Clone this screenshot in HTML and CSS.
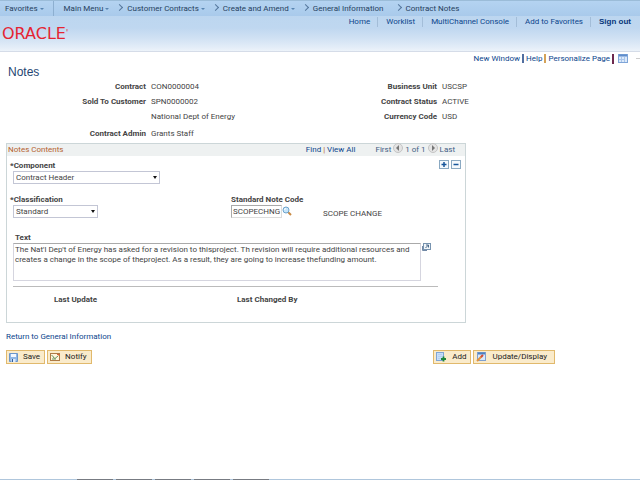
FILE: index.html
```html
<!DOCTYPE html>
<html lang="en">
<head>
<meta charset="utf-8">
<title>Contract Notes</title>
<link rel="stylesheet" href="styles.css">
</head>
<body>
<header class="header">
  <nav class="crumbs" aria-label="Breadcrumb">
    <a class="crumb favorites has-menu" href="#">Favorites</a>
    <a class="crumb main-menu has-menu" href="#">Main Menu</a>
    <a class="crumb next has-menu" href="#">Customer Contracts</a>
    <a class="crumb next has-menu" href="#">Create and Amend</a>
    <a class="crumb next" href="#">General Information</a>
    <a class="crumb next last" href="#">Contract Notes</a>
  </nav>
  <div class="banner">
    <div class="logo">ORACLE<span class="mark">'</span></div>
    <nav class="links" aria-label="Main">
      <a href="#">Home</a>
      <a href="#">Worklist</a>
      <a href="#">MultiChannel Console</a>
      <a href="#">Add to Favorites</a>
      <a class="signout" href="#">Sign out</a>
    </nav>
  </div>
</header>
<main>
  <div class="pagebar">
    <a href="#">New Window</a>
    <a class="blue" href="#">Help</a>
    <a class="gold" href="#">Personalize Page</a>
    <a class="wine" href="#" aria-label="Page grid">
      <svg width="10" height="10" viewBox="0 0 10 10"><rect x=".5" y=".5" width="9" height="8" fill="#dbe9fa" stroke="#7fa5d8"/><path d="M1 1.500h8" stroke="#5f8dcc" stroke-width="2"/><path d="M1 5.500h5M3.500 3v5M6.500 3v5" stroke="#a9c5ea"/></svg>
    </a>
    <span class="edge"></span>
  </div>
  <h1>Notes</h1>
  <dl class="summary">
    <dt>Contract</dt><dd>CON0000004</dd><dt>Business Unit</dt><dd>USCSP</dd>
    <dt>Sold To Customer</dt><dd>SPN0000002</dd><dt>Contract Status</dt><dd>ACTIVE</dd>
    <dt></dt><dd>National Dept of Energy</dd><dt>Currency Code</dt><dd>USD</dd>
    <dt>Contract Admin</dt><dd>Grants Staff</dd>
  </dl>
  <form>
    <section class="panel">
      <div class="panel-head">
        <h2>Notes Contents</h2>
        <div class="find"><a href="#">Find</a> | <a href="#">View All</a></div>
        <div class="pager">
          <span>First</span>
          <button type="button" class="round" aria-label="Previous"><svg width="10" height="10" viewBox="0 0 10 10"><circle cx="5" cy="5" r="4.500" fill="#e4e4e4" stroke="#c4c4c4"/><path d="M6 2v6L3 5z" fill="#777"/></svg></button>
          <span>1 of 1</span>
          <button type="button" class="round" aria-label="Next"><svg width="10" height="10" viewBox="0 0 10 10"><circle cx="5" cy="5" r="4.500" fill="#e4e4e4" stroke="#c4c4c4"/><path d="M4 2v6l3-3z" fill="#777"/></svg></button>
          <span>Last</span>
        </div>
      </div>
      <div class="panel-body">
        <div class="row component-row">
          <div class="field">
            <label for="component">*Component</label>
            <span class="select wide"><select id="component"><option>Contract Header</option></select></span>
          </div>
          <div class="row-tools">
            <button type="button" aria-label="Add row"><svg width="10" height="9" viewBox="0 0 10 9"><rect x=".5" y=".5" width="9" height="8" fill="#f4f9fd" stroke="#8aa9c2"/><path d="M2.500 4.500h5M5 2v5" stroke="#17569b" stroke-width="1.500"/></svg></button>
            <button type="button" aria-label="Delete row"><svg width="10" height="9" viewBox="0 0 10 9"><rect x=".5" y=".5" width="9" height="8" fill="#f4f9fd" stroke="#8aa9c2"/><path d="M2.500 4.500h5" stroke="#17569b" stroke-width="1.500"/></svg></button>
          </div>
        </div>
        <div class="row class-row">
          <div class="field class-field">
            <label for="classification">*Classification</label>
            <span class="select"><select id="classification"><option>Standard</option></select></span>
          </div>
          <div class="field">
            <label class="code-label" for="code">Standard Note Code</label>
            <div class="lookup">
              <input id="code" type="text" value="SCOPECHNG">
              <button type="button" aria-label="Look up"><svg width="10" height="10" viewBox="0 0 10 10"><path d="M6 6l3 3" stroke="#c98b45" stroke-width="2"/><circle cx="4" cy="4" r="3" fill="#c7e6fa" stroke="#6da3cc"/><path d="M2.500 4a1.500 1.500 0 0 1 1.500-1.500" fill="none" stroke="#fff"/></svg></button>
              <span class="code-name">SCOPE CHANGE</span>
            </div>
          </div>
        </div>
        <label class="text-label" for="text">Text</label>
        <div class="text-row">
          <textarea id="text">The Nat'l Dep't of Energy has asked for a revision to thisproject. Th revision will require additional resources and
creates a change in the scope of theproject. As a result, they are going to increase thefunding amount.</textarea>
          <button type="button" aria-label="Expand text"><svg width="10" height="9" viewBox="0 0 10 9"><path d="M1.500 3v4.500H6" fill="none" stroke="#7088a5"/><rect x="2.500" y=".5" width="7" height="6" fill="#f0f5fa" stroke="#7894b0"/><path d="M4.500 5l3-3M5 2h2.500v2.500" fill="none" stroke="#496889"/></svg></button>
        </div>
        <div class="updates"><span>Last Update</span><span>Last Changed By</span></div>
      </div>
    </section>
    <a class="return" href="#">Return to General Information</a>
    <div class="toolbar">
      <div class="group">
        <button type="submit" class="save"><svg width="9" height="9" viewBox="0 0 9 9"><path d="M.5.5h8v8h-8z" fill="#91b7e5" stroke="#6b96cb"/><path d="M2 1h5v3H2z" fill="#f2f7ff"/><path d="M2.500 6h4v3h-4z" fill="#dce9fb"/><path d="M3.500 6v3" stroke="#315f9b"/></svg>Save</button>
        <button type="button" class="notify"><svg width="10" height="8" viewBox="0 0 10 8"><rect x=".5" y=".5" width="9" height="7" fill="#fff4dc" stroke="#ae7b45"/><path d="M1.500 2l2 2M8 3L5 5.500 3 4M2 6h4" fill="none" stroke="#69965f"/><path d="M7 1.500h2V3" fill="none" stroke="#d76437"/></svg>Notify</button>
      </div>
      <div class="group">
        <button type="button" class="add"><svg width="11" height="10" viewBox="0 0 11 10"><rect x=".5" y=".5" width="7" height="8" fill="#c8defa" stroke="#7fa5d5"/><path d="M2 2.500h4M2 4.500h4M2 6.500h3" stroke="#b5d0f0"/><path d="M5 7h5M7.500 4.500v5" stroke="#20863a" stroke-width="1.800"/></svg>Add</button>
        <button type="button" class="update"><svg width="10" height="10" viewBox="0 0 10 10"><rect x="1.500" y=".5" width="8" height="8" fill="#d8e8fb" stroke="#7d9fcf"/><path d="M2 1.500h7" stroke="#4f80be" stroke-width="2"/><path d="M1 9l5-5" stroke="#e3923c" stroke-width="2"/><path d="M5 5l2-2" stroke="#d14b3c" stroke-width="2"/></svg>Update/Display</button>
      </div>
    </div>
  </form>
</main>
<footer class="strip"><i></i><i></i><i></i><i></i><i></i></footer>
</body>
</html>
```
FILE: styles.css
```css
* { box-sizing: border-box; }
body {
  margin: 0;
  min-height: 100vh;
  display: flex;
  flex-direction: column;
  background: #fff;
  color: #444;
  font: 8px/10px Roboto, "Liberation Sans", Arial, sans-serif;
}
a { color: #0b458c; text-decoration: none; }
button, input, select, textarea { margin: 0; font: inherit; color: inherit; border-radius: 0; }
button { padding: 0; border: 0; background: none; }
svg { display: block; flex: none; }
label, dt { font-weight: bold; }

.header {
  background: linear-gradient(#b9d5ef 0, #bfd7f0 28px, #d0e1f3 38px, #e5eef8 48px, #edf3fa 51px);
  border-bottom: 1px solid #d5dce8;
}
.crumbs {
  display: flex;
  height: 16px;
  align-items: center;
  padding-left: 5px;
  border-top: 1px solid #9bbcd8;
  background: linear-gradient(#b4d3f1, #a9caeb);
}
.crumb { color: #263f60; white-space: nowrap; }
.has-menu::after {
  content: "";
  display: inline-block;
  margin: 0 0 1px 2px;
  border: 2px solid transparent;
  border-top-color: #5783b0;
  border-bottom: 0;
}
.favorites { padding-right: 9px; border-right: 1px solid #8dafd0; line-height: 15px; }
.main-menu { margin-left: 10px; }
.next::before {
  content: "";
  display: inline-block;
  width: 4px;
  height: 4px;
  margin: 0 5px 1px 8px;
  border: solid #55779c;
  border-width: 1px 1px 0 0;
  transform: rotate(45deg);
}
.last { margin-left: 4px; }
.banner { display: flex; justify-content: space-between; height: 35px; }
.logo { padding: 9px 0 0 2px; color: #e52432; font: 16px/17px "DejaVu Sans", sans-serif; }
.mark { font-size: 8px; vertical-align: top; }
.links { display: flex; padding: 1px 9px 0 0; }
.links a { height: 10px; padding-left: 8px; margin-left: 7px; border-left: 1px solid #a3bdd8; }
.links a:first-child { border-left: 0; }
.links .signout { color: #06357a; font: bold 8px/10px "Liberation Sans", Arial, sans-serif; }

.pagebar { display: flex; align-items: center; justify-content: flex-end; height: 13px; }
.pagebar a + a { padding-left: 2px; margin-left: 2px; border-left: 2px solid; line-height: 9px; }
.pagebar .blue { border-color: #526fa0; }
.pagebar .gold { border-color: #d5a258; }
.pagebar a.wine { border-color: #6d294e; padding-left: 4px; }
.edge { width: 4px; height: 1px; margin-left: 8px; background: #ccc; }
h1 { margin: 0 0 0 8px; color: #254572; font: 12px/14px "Liberation Sans", Arial, sans-serif; }
.summary {
  display: grid;
  grid-template-columns: 146px 196px 95px 1fr;
  grid-template-rows: repeat(3, 15px) 19px;
  align-items: center;
  margin: 0;
}
.summary dt { text-align: right; }
.summary dd { margin: 0 0 0 5px; }
.panel { max-width: 460px; margin: 0 6px; border: 1px solid #ccd6d8; }
.panel-head { display: flex; align-items: center; height: 12px; padding-right: 10px; background: #eef1f1; }
.panel-head h2 { flex: 1; margin: 0 0 0 1px; font: inherit; color: #b5622e; }
.find { margin-right: 20px; color: #b5622e; }
.pager { display: flex; align-items: center; gap: 2px; color: #426084; }
.round { margin-bottom: 4px; }
.panel-body { padding: 4px 4px 17px 6px; }
.row { display: flex; }
.field label { display: block; height: 11px; margin-left: -3px; line-height: 11px; }
.component-row { justify-content: space-between; height: 34px; }
.row-tools { display: flex; gap: 2px; height: 9px; }
.row-tools button { height: 9px; }
.select { position: relative; display: block; width: 85px; }
.wide { width: 147px; }
.select::after {
  content: "";
  position: absolute;
  right: 3px;
  top: 5px;
  border: 2px solid transparent;
  border-top: 3px solid #111;
  border-bottom: 0;
  pointer-events: none;
}
select {
  appearance: none;
  display: block;
  width: 100%;
  height: 13px;
  padding: 0 10px 0 2px;
  border: 1px solid #c3c6d5;
  background: #fff;
}
.class-row { height: 38px; }
.class-field { width: 218px; }
.field .code-label { margin-left: 0; }
.lookup { display: flex; }
.lookup input { width: 51px; height: 13px; padding: 0 0 0 1px; border: 1px solid #aaa; border-right-color: #ddd; border-bottom-color: #ddd; }
.lookup button { height: 12px; }
.code-name { margin: 4px 0 0 31px; }
.text-label { display: block; margin-left: 2px; line-height: 11px; }
.text-row { display: flex; align-items: flex-start; }
textarea {
  width: 408px;
  height: 38px;
  padding: 1px;
  border: 1px solid #d5d5df;
  border-top-color: #aaa;
  resize: none;
  overflow: hidden;
}
.updates {
  display: grid;
  grid-template-columns: 183px 1fr;
  max-width: 425px;
  margin-top: 5px;
  padding: 8px 0 0 41px;
  border-top: 1px solid #bbb;
  font-weight: bold;
}
.return { display: inline-block; margin: 9px 0 8px 6px; }
.toolbar { display: flex; justify-content: space-between; max-width: 555px; padding-left: 6px; }
.group { display: flex; gap: 2px; }
.toolbar button {
  display: flex;
  align-items: center;
  height: 14px;
  padding: 0 4px 0 2px;
  gap: 5px;
  border: 1px solid #e1b96c;
  background: #faebcb;
  color: #222;
}
.toolbar .update { padding-right: 7px; gap: 6px; }
.strip { display: flex; gap: 3px; height: 1px; margin-top: auto; padding-left: 77px; background: #afc6dc; }
.strip i { width: 36px; background: #777b82; }
```
